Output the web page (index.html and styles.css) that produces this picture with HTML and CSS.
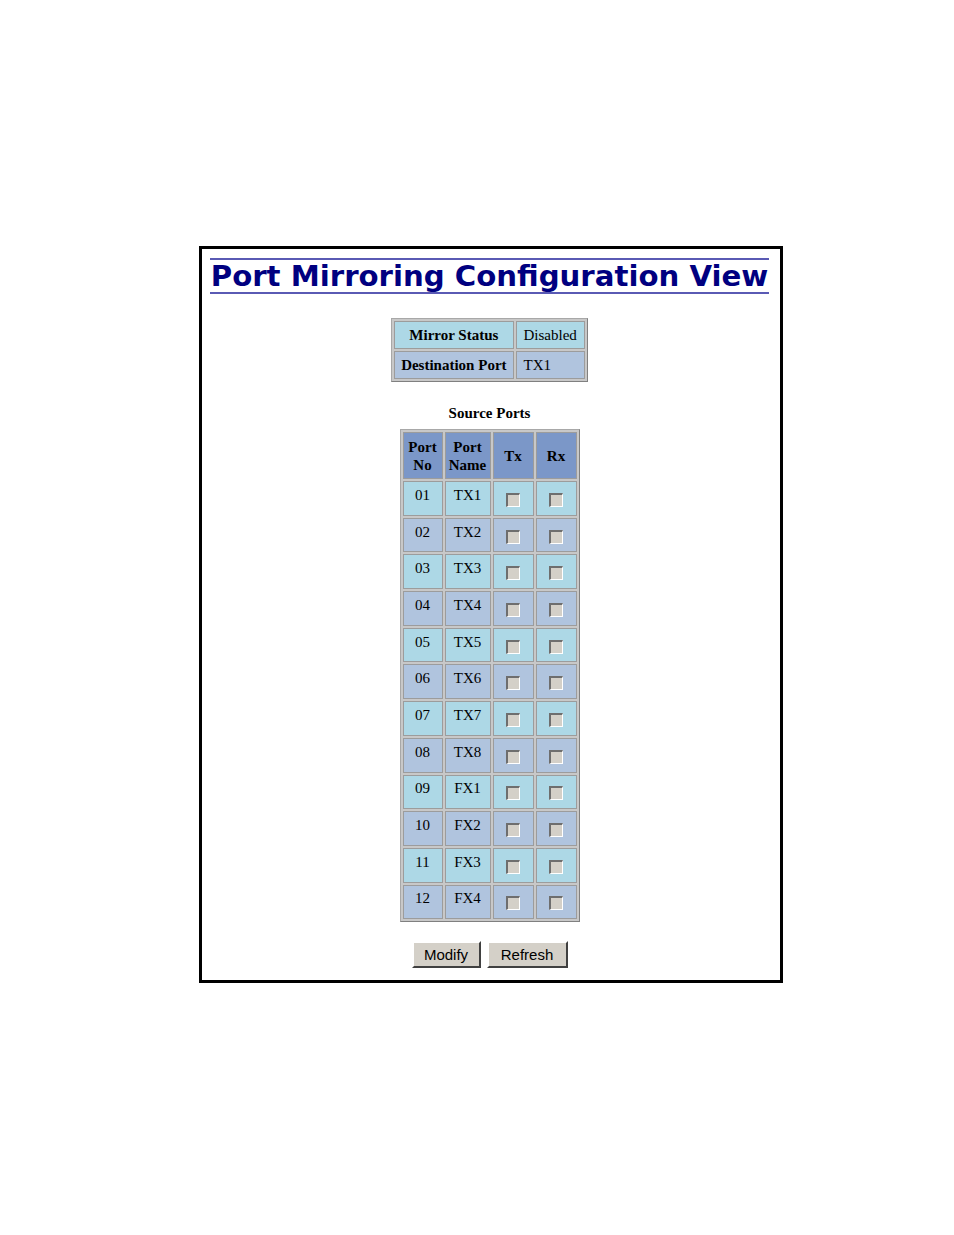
FILE: index.html
```html
<!DOCTYPE html>
<html>
<head>
<meta charset="utf-8">
<link rel="stylesheet" href="styles.css">
</head>
<body>
<div class="frame">
  <div class="title">Port Mirroring Configuration View</div>
  <table class="mirror">
    <tr class="r1"><th>Mirror Status</th><td>Disabled</td></tr>
    <tr class="r2"><th>Destination Port</th><td>TX1</td></tr>
  </table>
  <div class="caption">Source Ports</div>
  <table class="ports">
    <tr class="head"><th class="c1">Port<br>No</th><th class="c2">Port<br>Name</th><th class="c3">Tx</th><th class="c4">Rx</th></tr>
    <tr class="a"><td>01</td><td>TX1</td><td><span class="cb"></span></td><td><span class="cb"></span></td></tr>
    <tr class="b"><td>02</td><td>TX2</td><td><span class="cb"></span></td><td><span class="cb"></span></td></tr>
    <tr class="a"><td>03</td><td>TX3</td><td><span class="cb"></span></td><td><span class="cb"></span></td></tr>
    <tr class="b"><td>04</td><td>TX4</td><td><span class="cb"></span></td><td><span class="cb"></span></td></tr>
    <tr class="a"><td>05</td><td>TX5</td><td><span class="cb"></span></td><td><span class="cb"></span></td></tr>
    <tr class="b"><td>06</td><td>TX6</td><td><span class="cb"></span></td><td><span class="cb"></span></td></tr>
    <tr class="a"><td>07</td><td>TX7</td><td><span class="cb"></span></td><td><span class="cb"></span></td></tr>
    <tr class="b"><td>08</td><td>TX8</td><td><span class="cb"></span></td><td><span class="cb"></span></td></tr>
    <tr class="a"><td>09</td><td>FX1</td><td><span class="cb"></span></td><td><span class="cb"></span></td></tr>
    <tr class="b"><td>10</td><td>FX2</td><td><span class="cb"></span></td><td><span class="cb"></span></td></tr>
    <tr class="a"><td>11</td><td>FX3</td><td><span class="cb"></span></td><td><span class="cb"></span></td></tr>
    <tr class="b"><td>12</td><td>FX4</td><td><span class="cb"></span></td><td><span class="cb"></span></td></tr>
  </table>
  <div class="buttons">
    <button class="btn b-mod">Modify</button>
    <button class="btn b-ref">Refresh</button>
  </div>
</div>
</body>
</html>
```
FILE: styles.css
```css
html, body {
  margin: 0;
  padding: 0;
  background: #ffffff;
}
body {
  font-family: "Liberation Serif", "Times New Roman", serif;
  font-size: 15px;
  color: #000;
}
.frame {
  box-sizing: border-box;
  margin: 246px 0 0 199px;
  width: 584px;
  height: 737px;
  border: 3px solid #000;
  padding: 9px 11px 0 8px;
}
.title {
  border-top: 2px solid #5a5ab4;
  border-bottom: 2px solid #5a5ab4;
  font-family: "DejaVu Sans", Verdana, sans-serif;
  font-weight: bold;
  font-size: 29.2px;
  color: #000080;
  text-align: center;
  line-height: 32px;
  height: 32px;
  white-space: nowrap;
}
.mirror {
  margin: 24px auto 0;
  border-collapse: separate;
  border-spacing: 2px;
  background: #c8c8c8;
  border: 1px solid #a8a8a8;
  border-right-color: #808080;
  border-bottom-color: #808080;
}
.mirror th, .mirror td {
  height: 26px;
  padding: 0 6px;
  border: 1px solid #9c9c9c;
  white-space: nowrap;
}
.mirror .r1 th, .mirror .r1 td { background: #add8e6; }
.mirror .r2 th, .mirror .r2 td { background: #b0c4de; }
.mirror th { font-weight: bold; }
.mirror td { text-align: left; padding: 0 7px 0 7px; }
.caption {
  text-align: center;
  font-weight: bold;
  margin-top: 23px;
  height: 17px;
  line-height: 17px;
}
.ports {
  margin: 7px auto 0;
  border-collapse: separate;
  border-spacing: 2px;
  background: #c8c8c8;
  border: 1px solid #a8a8a8;
  border-right-color: #808080;
  border-bottom-color: #808080;
}
.ports th, .ports td {
  border: 1px solid #9c9c9c;
  text-align: center;
  padding: 0;
}
.ports th {
  background: #7b97c8;
  height: 45px;
  line-height: 18px;
  font-weight: bold;
}
.ports th.c1 { width: 38px; }
.ports th.c2 { width: 44px; }
.ports th.c3 { width: 39px; }
.ports th.c4 { width: 39px; }
.ports td {
  height: 34.7px;
  box-sizing: border-box;
  vertical-align: middle;
  line-height: 15px;
}
.ports tr.a td { background: #add8e6; }
.ports tr.b td { background: #b0c4de; }
.ports td:nth-child(1), .ports td:nth-child(2) {
  padding-bottom: 6px;
}
.cb {
  display: inline-block;
  box-sizing: border-box;
  width: 14px;
  height: 14px;
  margin-top: 3px;
  background: #d4d0c8;
  border-top: 2px solid #6e6e6e;
  border-left: 2px solid #6e6e6e;
  border-right: 1px solid #ffffff;
  border-bottom: 1px solid #ffffff;
  vertical-align: middle;
}
.buttons {
  text-align: center;
  margin-top: 19px;
  font-size: 0;
}
.btn {
  font-family: "Liberation Sans", Arial, sans-serif;
  font-size: 15px;
  color: #000;
  background: #d4d0c8;
  height: 27px;
  padding: 0;
  border: 2px solid;
  border-color: #ffffff #404040 #404040 #ffffff;
  margin: 0 3px;
  vertical-align: top;
}
.b-mod { width: 69px; }
.b-ref { width: 81px; }
```
